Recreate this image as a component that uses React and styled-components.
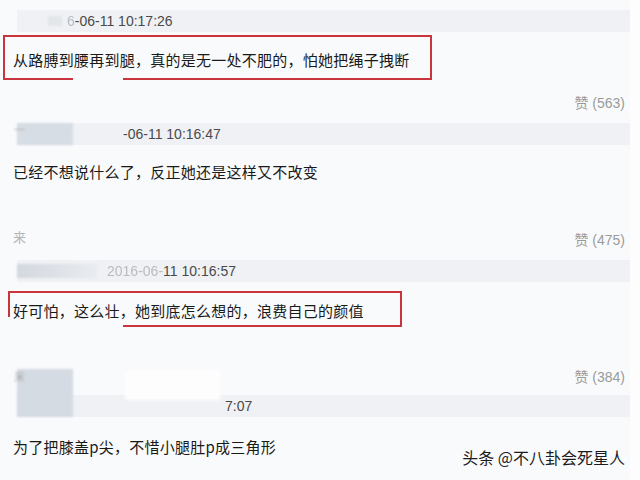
import React from "react";
import styled, {createGlobalStyle} from 'styled-components';

const GlobalStyle = createGlobalStyle`
  body {
    margin: 0;
    background: #fdfdfe;
  }
`;

const Page = styled.div`
  position: relative;
  width: 630px;
  height: 480px;
  padding-top: 10px;
  box-sizing: border-box;
  background: #f9fafc;
  font-family: "Liberation Sans", "Noto Sans CJK SC", sans-serif;
`;

const Header = styled.div`
  display: flex;
  align-items: center;
  height: 22px;
  margin-left: 17px;
  margin-top: ${p => p.$top || 0}px;
  background: #eff1f4;
`;

const Avatar = styled.div`
  position: relative;
  flex-shrink: 0;
  width: ${p => p.$w}px;
  height: ${p => p.$h}px;
  margin-left: ${p => p.$left || 0}px;
  background: ${p => p.$tone};
  align-self: ${p => p.$h > 22 ? 'flex-end' : 'center'};
  filter: blur(0.8px);

  &::before {
    content: "${p => p.$mark || ''}";
    position: absolute;
    left: -3px;
    top: -1px;
    font-size: 11px;
    color: #aaa;
  }
`;

const Smudge = styled.div`
  flex-shrink: 0;
  width: 95px;
  height: 30px;
  margin-left: ${p => p.$left}px;
  margin-top: -25px;
  align-self: flex-start;
  background: #fdfdfe;
  filter: blur(1.5px);
`;

const DateText = styled.span`
  margin-left: ${p => p.$gap}px;
  font-size: 14px;
  color: #4a4a4a;
  white-space: nowrap;
`;

const Faded = styled.span`
  color: #b8bcc2;
  filter: blur(0.6px);
`;

const FrameRow = styled.div`
  margin-top: ${p => p.$top}px;
  margin-left: ${p => p.$left}px;
`;

// hand-drawn red annotation box, with a break in its lower edge
const Frame = styled.div`
  position: relative;
  display: inline-block;
  border: 2px solid #c8353d;
  padding: ${p => p.$pad};
  font-family: "Noto Sans CJK SC", sans-serif;
  font-size: 15px;
  line-height: 20px;
  letter-spacing: 0.25px;
  color: #1a1a1a;

  &::after {
    content: "";
    position: absolute;
    left: ${p => p.$gapLeft}px;
    bottom: -2px;
    width: ${p => p.$gapWidth}px;
    height: 2px;
    background: #f9fafc;
  }

  &::before {
    content: "";
    position: absolute;
    left: -2px;
    bottom: -2px;
    width: 2px;
    height: ${p => p.$legCut || 0}px;
    background: #f9fafc;
  }
`;

const Text = styled.div`
  margin-top: ${p => p.$top}px;
  padding-left: 13px;
  font-family: "Noto Sans CJK SC", sans-serif;
  font-size: 15px;
  line-height: 20px;
  letter-spacing: 0.25px;
  color: #1a1a1a;
`;

const Footer = styled.div`
  display: flex;
  justify-content: space-between;
  align-items: flex-end;
  margin-top: ${p => p.$top}px;
  padding: 0 5px 0 13px;
  height: ${p => p.$h || 16}px;
`;

const Name = styled.span`
  align-self: flex-start;
  font-family: "Noto Sans CJK SC", sans-serif;
  font-size: 13px;
  line-height: 14px;
  color: #b5b5b5;
`;

const Like = styled.span`
  margin-left: auto;
  font-size: 14px;
  line-height: 16px;
  color: #9a9a9a;
  font-family: "Liberation Sans", "Noto Sans CJK SC", sans-serif;
`;

const Watermark = styled.div`
  position: absolute;
  right: 5px;
  bottom: 13px;
  font-family: "Noto Sans CJK SC", sans-serif;
  font-size: 16px;
  line-height: 20px;
  color: #1c1c1c;
  text-shadow: 0 0 2px #fff, 0 0 1px #fff;
`;

const App = () => {
    return (
        <>
            <GlobalStyle/>
            <Page>
                <Header>
                    <Avatar $w={14} $h={10} $left={31} $tone="#e3e6ea"/>
                    <DateText $gap={5}><Faded>6</Faded>-06-11 10:17:26</DateText>
                </Header>
                <FrameRow $top={3} $left={3}>
                    <Frame $pad="13px 20px 8px 8px" $gapLeft={68} $gapWidth={50}>
                        从路膊到腰再到腿，真的是无一处不肥的，怕她把绳子拽断
                    </Frame>
                </FrameRow>
                <Footer $top={15}>
                    <Like>赞 (563)</Like>
                </Footer>

                <Header $top={12}>
                    <Avatar $w={56} $h={22} $tone="#d7dde5" $mark="—"/>
                    <DateText $gap={50}>-06-11 10:16:47</DateText>
                </Header>
                <Text $top={17}>已经不想说什么了，反正她还是这样又不改变</Text>
                <Footer $top={48} $h={18}>
                    <Name>来</Name>
                    <Like>赞 (475)</Like>
                </Footer>

                <Header $top={12}>
                    <Avatar $w={80} $h={14} $tone="linear-gradient(90deg, #d3d8df, #e9ecf0)"/>
                    <DateText $gap={10}><Faded>2016-06-</Faded>11 10:16:57</DateText>
                </Header>
                <FrameRow $top={9} $left={8}>
                    <Frame $pad="8px 36px 4px 3px" $gapLeft={-2} $gapWidth={115} $legCut={10}>
                        好可怕，这么壮，她到底怎么想的，浪费自己的颜值
                    </Frame>
                </FrameRow>
                <Footer $top={42}>
                    <Like>赞 (384)</Like>
                </Footer>

                <Header $top={10}>
                    <Avatar $w={56} $h={48} $tone="#d5dbe3" $mark="米"/>
                    <Smudge $left={52}/>
                    <DateText $gap={5}>7:07</DateText>
                </Header>
                <Text $top={20}>为了把膝盖p尖，不惜小腿肚p成三角形</Text>

                <Watermark>头条 @不八卦会死星人</Watermark>
            </Page>
        </>
    );
};

export default App;
